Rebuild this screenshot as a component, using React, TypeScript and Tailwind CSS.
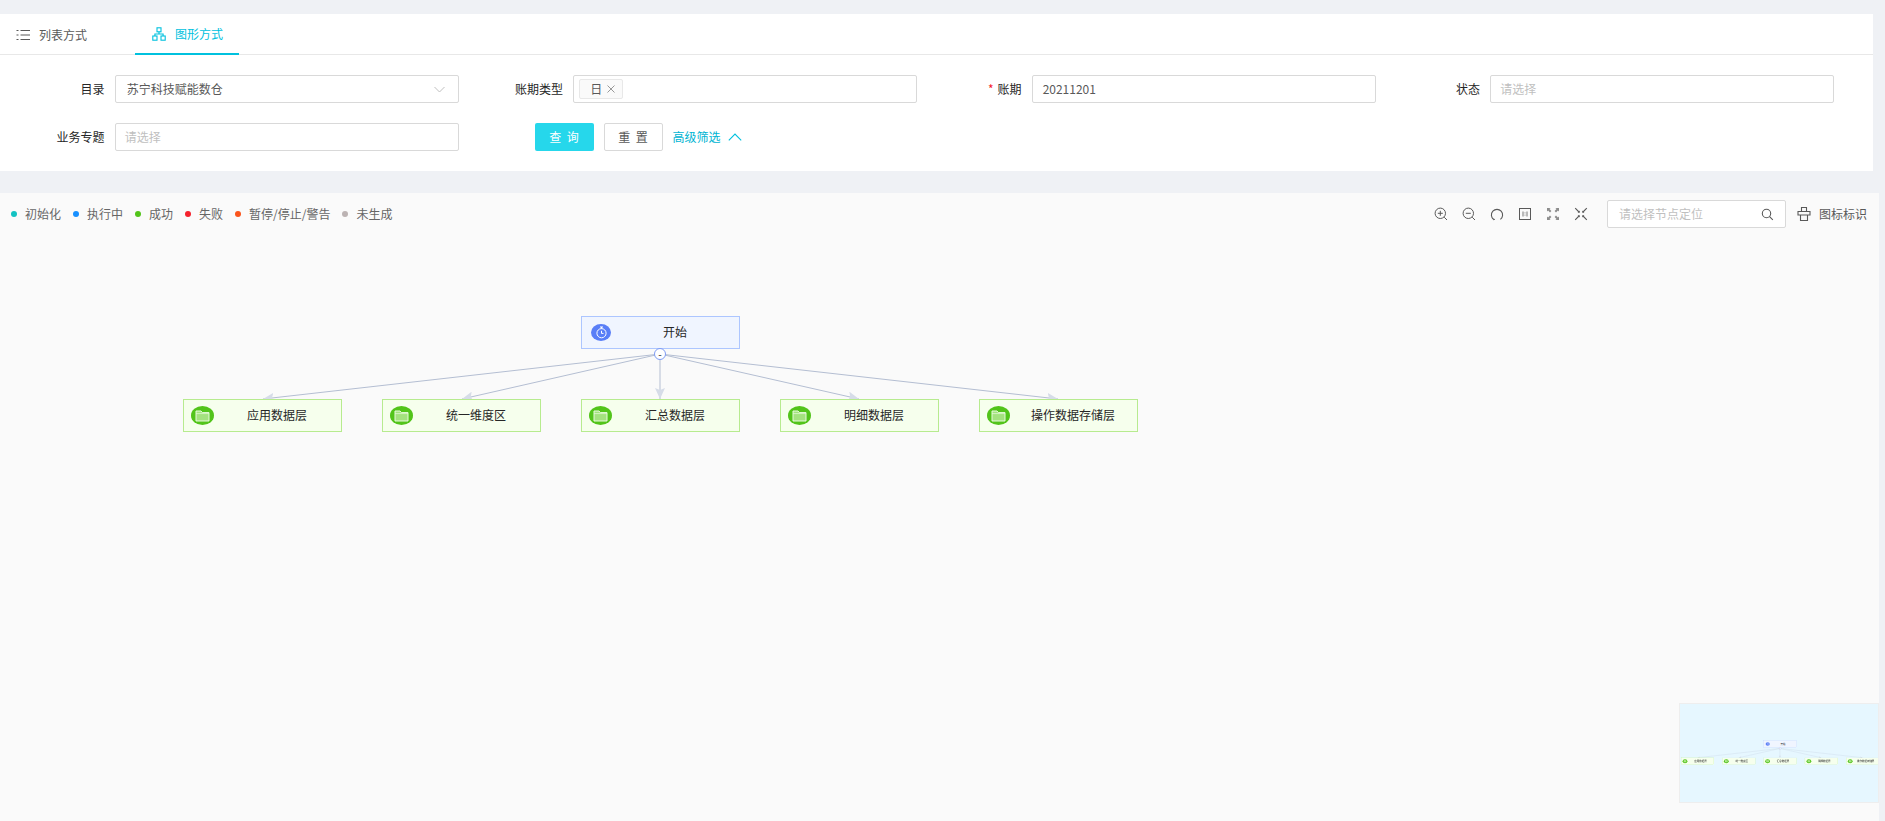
// App.tsx
const font = "font-['Noto_Sans_CJK_SC','Noto_Sans_CJK_SC',sans-serif]";

const legend = [
  { label: "初始化", dot: "bg-[#13c2c2]" },
  { label: "执行中", dot: "bg-[#1890ff]" },
  { label: "成功", dot: "bg-[#52c41a]" },
  { label: "失败", dot: "bg-[#f5222d]" },
  { label: "暂停/停止/警告", dot: "bg-[#fa541c]" },
  { label: "未生成", dot: "bg-[#bcb3b3]" },
];

const layers = [
  { label: "应用数据层", left: "left-[183px]" },
  { label: "统一维度区", left: "left-[382px]" },
  { label: "汇总数据层", left: "left-[581px]" },
  { label: "明细数据层", left: "left-[780px]" },
  { label: "操作数据存储层", left: "left-[979px]" },
];

const edgeTips = [263, 462, 660, 859, 1058];

function FolderBadge() {
  return (
    <span className="flex h-[19px] w-[23px] shrink-0 items-center justify-center rounded-[50%] bg-[#52c41a]">
      <svg width="15" height="12" viewBox="0 0 15 12" fill="none">
        <path d="M1 1h5l1.4 1.6H14V11H1Z" stroke="#e8fadc" strokeWidth="1" fill="#a4e27f" />
        <path d="M1 3.6h13" stroke="#e8fadc" strokeWidth="0.7" />
      </svg>
    </span>
  );
}

function TimerBadge() {
  return (
    <span className="flex h-[17px] w-[20px] shrink-0 items-center justify-center rounded-[50%] bg-[#597ef7]">
      <svg width="13" height="13" viewBox="0 0 13 13" fill="none" stroke="#fff" strokeWidth="1">
        <circle cx="6.5" cy="7.2" r="4.6" />
        <path d="M5 1h3M6.5 1v1.6M6.5 4.8v2.6h2" />
      </svg>
    </span>
  );
}

// graph drawn in panel coordinates, reused by the minimap at a small scale
function Graph() {
  return (
    <div className="absolute left-0 top-0 h-[628px] w-[1300px]">
      <svg className="absolute left-0 top-0" width="1300" height="300" fill="none">
        <defs>
          <marker id="tip" viewBox="0 0 12 10" refX="11" refY="5" markerWidth="12" markerHeight="10" orient="auto" markerUnits="userSpaceOnUse">
            <path d="M0 0 L11 5 L0 10 L2 5 Z" fill="#d6dce8" />
          </marker>
        </defs>
        {edgeTips.map((x) => (
          <line key={x} x1="660" y1="161" x2={x} y2="206" stroke="#b4bed2" strokeWidth="1" markerEnd="url(#tip)" />
        ))}
      </svg>

      <div className="absolute left-[581px] top-[123px] flex h-[33px] w-[159px] items-center border border-[#adc6ff] bg-[#f0f5ff] pl-[9px] text-[12px] text-[#262626]">
        <TimerBadge />
        <span className="flex-1 pb-[2px] text-center">开始</span>
      </div>
      <div className="absolute left-[654px] top-[155px] flex h-[12px] w-[12px] items-center justify-center rounded-full border border-[#7f9cf5] bg-white text-[10px] leading-none text-[#262626]">
        -
      </div>

      {layers.map((item) => (
        <div
          key={item.label}
          className={`absolute top-[206px] flex h-[33px] w-[159px] items-center border border-[#b7eb8f] bg-[#f6ffed] pl-[7px] text-[12px] text-[#262626] ${item.left}`}
        >
          <FolderBadge />
          <span className="flex-1 pb-[2px] pr-[1px] text-center">{item.label}</span>
        </div>
      ))}
    </div>
  );
}

function ToolIcon({ children }: { children: React.ReactNode }) {
  return (
    <svg width="14" height="14" viewBox="0 0 14 14" fill="none" stroke="#595959" strokeWidth="1">
      {children}
    </svg>
  );
}

function Toolbar() {
  return (
    <div className="flex items-center">
      <div className="flex items-center gap-[14px]">
        <ToolIcon>
          <circle cx="6.3" cy="6.3" r="5.2" />
          <path d="M6.3 3.8v5M3.8 6.3h5M10.2 10.2l2.8 2.8" />
        </ToolIcon>
        <ToolIcon>
          <circle cx="6.3" cy="6.3" r="5.2" />
          <path d="M3.8 6.3h5M10.2 10.2l2.8 2.8" />
        </ToolIcon>
        <ToolIcon>
          <path d="M3.6 12.4A5.6 5.6 0 1 1 10.4 12.4" strokeWidth="1.1" />
          <path d="M2.7 11.2l.9 1.6 1.4-.6" strokeWidth="0.9" />
        </ToolIcon>
        <ToolIcon>
          <rect x="1.5" y="1.5" width="11" height="11" />
          <path d="M5 4.5v5M9 4.5v5M7 5.5v.8M7 7.7v.8" strokeWidth="0.8" />
        </ToolIcon>
        <svg width="14" height="14" viewBox="0 0 14 14" fill="#8c8c8c">
          <path d="M1 1h3.6L3.5 2.1 5.4 4 4 5.4 2.1 3.5 1 4.6ZM13 1v3.6l-1.1-1.1L10 5.4 8.6 4l1.9-1.9L9.4 1ZM1 13V9.4l1.1 1.1L4 8.6 5.4 10l-1.9 1.9L4.6 13ZM13 13H9.4l1.1-1.1L8.6 10 10 8.6l1.9 1.9L13 9.4Z" />
        </svg>
        <svg width="14" height="14" viewBox="0 0 14 14" fill="#595959" stroke="#595959" strokeWidth="1.1">
          <path d="M1.2 1.2L5 5M12.8 1.2L9 5M1.2 12.8L5 9M12.8 12.8L9 9" />
          <path d="M5.8 5.8V3.6L3.6 5.8ZM8.2 5.8V3.6L10.4 5.8ZM5.8 8.2V10.4L3.6 8.2ZM8.2 8.2V10.4L10.4 8.2Z" stroke="none" />
        </svg>
      </div>
      <div className="ml-[19px] flex h-[28px] w-[179px] items-center justify-between rounded-[2px] border border-[#d9d9d9] bg-white pl-[11px] pr-[11px] text-[12px] text-[#bfbfbf]">
        <span>请选择节点定位</span>
        <svg width="13" height="13" viewBox="0 0 13 13" fill="none" stroke="#595959" strokeWidth="1.1">
          <circle cx="5.5" cy="5.5" r="4.2" />
          <path d="M8.6 8.6l3.2 3.2" />
        </svg>
      </div>
      <svg className="ml-[11px]" width="14" height="16" viewBox="0 0 14 16" fill="none" stroke="#595959" strokeWidth="1.1">
        <path d="M4.5 5.5V1.5h5v4M1 5.5h12v3.5H1ZM3.5 9v5.5h7V9" />
      </svg>
      <span className="ml-[8px] text-[12px] text-[#595959]">图标标识</span>
    </div>
  );
}

function FormField({ label, required, children }: { label: string; required?: boolean; children: React.ReactNode }) {
  return (
    <div className="grid grid-cols-[25%_75%] items-center">
      <label className="pr-[10px] text-right text-[12px] text-[#262626]">
        {required && <span className="mr-[4px] text-[#f5222d]">*</span>}
        {label}
      </label>
      {children}
    </div>
  );
}

const inputBox = "flex h-[28px] items-center rounded-[2px] border border-[#d9d9d9] bg-white text-[12px]";

export default function App() {
  return (
    <div className={`h-[821px] w-full overflow-hidden bg-[#eff1f5] pt-[14px] ${font}`}>
      <div className="h-[157px] w-[1873px] bg-white">
        <div className="flex h-[41px] border-b border-[#e8e8e8] text-[12px]">
          <div className="flex h-[41px] w-[135px] items-center gap-[9px] pl-[16px] text-[#595959]">
            <svg width="14" height="12" viewBox="0 0 14 12" fill="none" stroke="#595959" strokeWidth="1.1">
              <path d="M4.5 1.5H14M4.5 6H14M4.5 10.5H14M.5 1.5h2M.5 6h2M.5 10.5h2" />
            </svg>
            <span>列表方式</span>
          </div>
          <div className="flex h-[41px] w-[104px] items-center gap-[9px] border-b-2 border-[#00c1de] pl-[17px] text-[#00c1de]">
            <svg width="14" height="14" viewBox="0 0 14 14" fill="none" stroke="#00c1de" strokeWidth="1.1">
              <rect x="5" y="0.8" width="4" height="4" />
              <rect x="0.8" y="9" width="4.2" height="4.2" />
              <rect x="9" y="9" width="4.2" height="4.2" />
              <path d="M7 4.8V7M2.9 9V7h8.2v2" />
            </svg>
            <span>图形方式</span>
          </div>
        </div>

        <div className="grid w-[1834px] grid-cols-4 gap-y-[20px] pt-[20px]">
          <FormField label="目录">
            <div className={`${inputBox} justify-between pl-[11px] pr-[13px] text-[#595959]`}>
              <span>苏宁科技赋能数仓</span>
              <svg width="11" height="7" viewBox="0 0 11 7" fill="none" stroke="#bfbfbf" strokeWidth="1">
                <path d="M.5 1l5 5 5-5" />
              </svg>
            </div>
          </FormField>
          <FormField label="账期类型">
            <div className={`${inputBox} pl-[5px]`}>
              <span className="flex h-[20px] w-[44px] items-center rounded-[2px] border border-[#e8e8e8] bg-[#fafafa] pl-[10px] text-[#595959]">
                日
                <svg className="ml-[5px]" width="8" height="8" viewBox="0 0 8 8" fill="none" stroke="#8c8c8c" strokeWidth="0.9">
                  <path d="M.5.5l7 7M7.5.5l-7 7" />
                </svg>
              </span>
            </div>
          </FormField>
          <FormField label="账期" required>
            <div className={`${inputBox} px-[10px] text-[#595959]`}>20211201</div>
          </FormField>
          <FormField label="状态">
            <div className={`${inputBox} px-[9px] text-[#bfbfbf]`}>请选择</div>
          </FormField>

          <FormField label="业务专题">
            <div className={`${inputBox} px-[9px] text-[#bfbfbf]`}>请选择</div>
          </FormField>
          <div className="flex items-center pl-[76px] text-[12px]">
            <button className="h-[28px] w-[59px] rounded-[2px] bg-[#26d7eb] text-white [word-spacing:3px]">查 询</button>
            <button className="ml-[10px] h-[28px] w-[59px] rounded-[2px] border border-[#d9d9d9] bg-white text-[#595959] [word-spacing:3px]">重 置</button>
            <span className="ml-[10px] text-[#00b4d2]">高级筛选</span>
            <svg className="ml-[7px]" width="14" height="8" viewBox="0 0 14 8" fill="none" stroke="#00c1de" strokeWidth="1.1">
              <path d="M.8 7.4L7 1l6.2 6.4" />
            </svg>
          </div>
        </div>
      </div>

      <div className="relative mt-[22px] h-[628px] w-[1879px] overflow-hidden bg-[#fafafa]">
        <div className="flex h-[42px] items-center justify-between pl-[11px] pr-[12px]">
          <div className="flex items-center gap-[12px] text-[12px] text-[#666]">
            {legend.map((item) => (
              <div key={item.label} className="flex items-center gap-[8px]">
                <span className={`h-[6px] w-[6px] rounded-full ${item.dot}`} />
                <span>{item.label}</span>
              </div>
            ))}
          </div>
          <Toolbar />
        </div>

        <Graph />

        <div className="absolute left-[1679px] top-[510px] h-[100px] w-[200px] overflow-hidden border border-[#eeeeee] bg-[#e6f7ff]">
          <div className="absolute left-[-37px] top-[11px] origin-top-left scale-[0.2075] blur-[1px]">
            <Graph />
          </div>
        </div>
      </div>
    </div>
  );
}
